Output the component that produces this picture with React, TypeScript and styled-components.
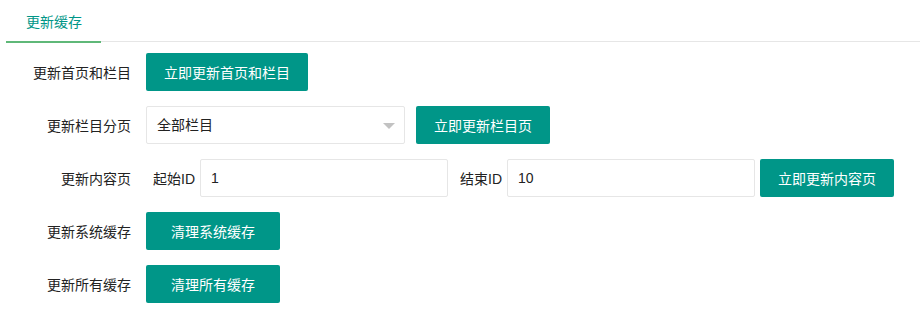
import React from "react";
import styled, { createGlobalStyle } from "styled-components";

const GlobalStyle = createGlobalStyle`
  html, body {
    margin: 0;
    padding: 0;
    background: #fff;
  }
  body {
    font-family: "Liberation Sans", "Noto Sans CJK SC", sans-serif;
    font-size: 14px;
    color: #333;
  }
`;

const Page = styled.div`
  width: 920px;
  height: 313px;
  padding: 0 6px;
  box-sizing: border-box;
`;

const TabBar = styled.ul`
  display: flex;
  margin: 0 -6px 0 0;
  padding: 0;
  list-style: none;
  height: 41px;
  border-bottom: 1px solid #e6e6e6;
`;

const TabItem = styled.li<{ active?: boolean }>`
  height: 41px;
  line-height: 44px;
  padding: 0 19px 0 20px;
  color: ${({ active }) => (active ? "#009688" : "#333")};
  border-bottom: 2px solid ${({ active }) => (active ? "#5FB878" : "transparent")};
  cursor: pointer;
`;

const Form = styled.div`
  display: flex;
  flex-direction: column;
  gap: 15px;
  margin-top: 11px;
`;

const Row = styled.div`
  display: flex;
  align-items: center;
  height: 38px;
`;

const Label = styled.label`
  width: 140px;
  box-sizing: border-box;
  padding-right: 15px;
  text-align: right;
  color: #222;
  flex-shrink: 0;
`;

const Mid = styled.span<{ left?: number; right?: number }>`
  margin-left: ${({ left }) => left ?? 7}px;
  margin-right: ${({ right }) => right ?? 7}px;
  color: #222;
`;

const Button = styled.button<{ width?: number; gap?: number }>`
  height: 38px;
  padding: 0 18px;
  ${({ width }) => (width ? `width: ${width}px;` : "")}
  margin-left: ${({ gap }) => gap ?? 0}px;
  border: none;
  border-radius: 2px;
  background: #009688;
  color: #fff;
  font-family: inherit;
  font-size: 14px;
  white-space: nowrap;
  cursor: pointer;
`;

const Input = styled.input`
  width: 248px;
  height: 38px;
  box-sizing: border-box;
  padding: 0 10px;
  border: 1px solid #e6e6e6;
  border-radius: 2px;
  font-family: inherit;
  font-size: 14px;
  color: #222;
  outline: none;
`;

const Select = styled.div`
  position: relative;
  width: 259px;
  height: 38px;
  box-sizing: border-box;
  padding: 0 10px;
  border: 1px solid #e6e6e6;
  border-radius: 2px;
  line-height: 36px;
  color: #222;

  &::after {
    content: "";
    position: absolute;
    right: 9px;
    top: 16px;
    border-style: solid;
    border-width: 6px 6px 0 6px;
    border-color: #c2c2c2 transparent transparent transparent;
  }
`;

const App = () => {
  return (
    <>
      <GlobalStyle />
      <Page>
        <TabBar>
          <TabItem active>更新缓存</TabItem>
        </TabBar>
        <Form>
          <Row>
            <Label>更新首页和栏目</Label>
            <Button>立即更新首页和栏目</Button>
          </Row>
          <Row>
            <Label>更新栏目分页</Label>
            <Select>全部栏目</Select>
            <Button gap={11}>立即更新栏目页</Button>
          </Row>
          <Row>
            <Label>更新内容页</Label>
            <Mid right={5}>起始ID</Mid>
            <Input defaultValue="1" />
            <Mid left={12} right={5}>
              结束ID
            </Mid>
            <Input defaultValue="10" />
            <Button gap={5}>立即更新内容页</Button>
          </Row>
          <Row>
            <Label>更新系统缓存</Label>
            <Button width={134}>清理系统缓存</Button>
          </Row>
          <Row>
            <Label>更新所有缓存</Label>
            <Button width={134}>清理所有缓存</Button>
          </Row>
        </Form>
      </Page>
    </>
  );
};

export default App;
